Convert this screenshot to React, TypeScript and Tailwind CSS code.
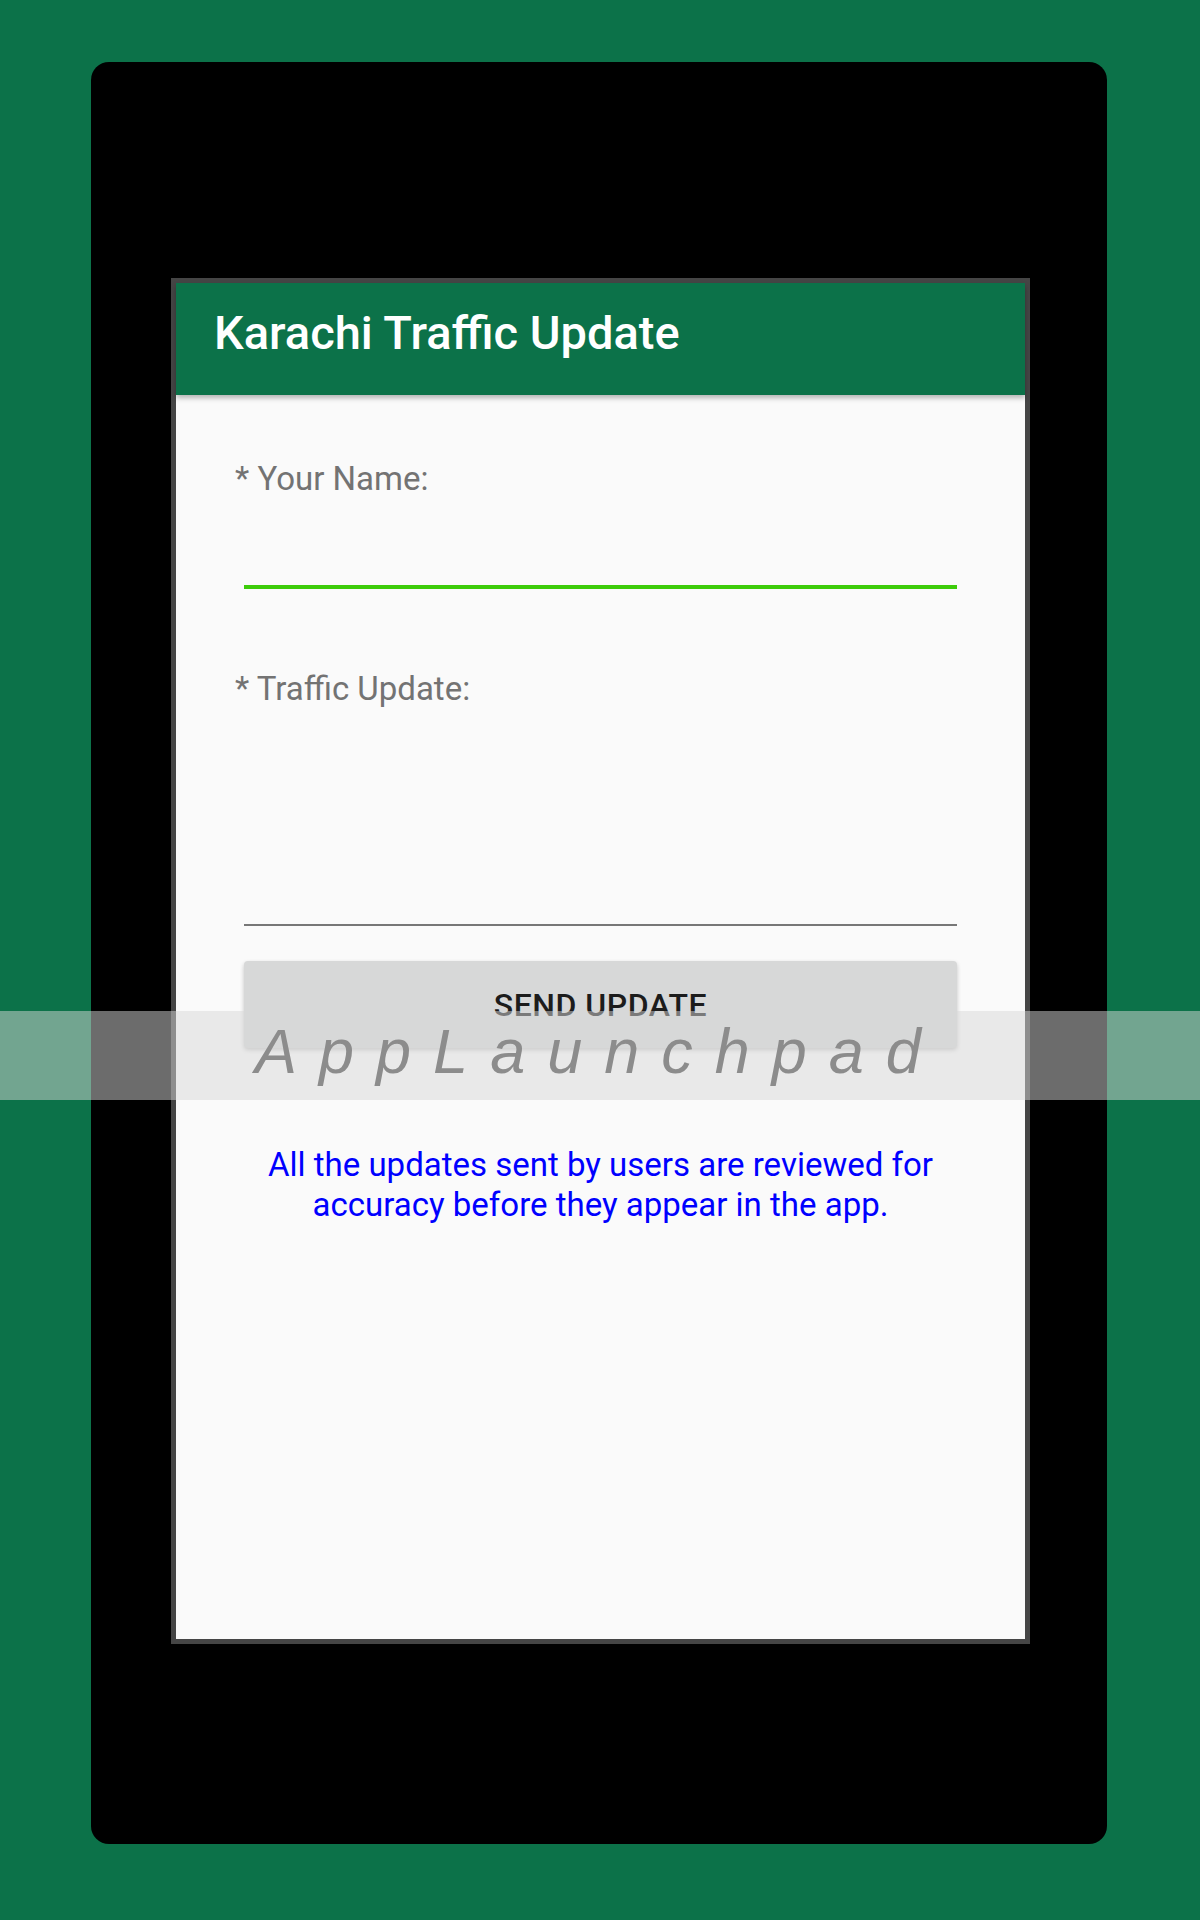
import React from "react";

export default function App() {
  return (
    <div className="relative w-[1200px] h-[1920px] overflow-hidden bg-[#0c7249] font-[Roboto,sans-serif]">
      <div className="ml-[91px] mt-[62px] w-[1016px] h-[1782px] rounded-[18px] bg-black pt-[216px] pl-[80px]">
        <div className="w-[859px] h-[1366px] border-[5px] border-[#454545] bg-[#fafafa] flex flex-col">
          <div className="relative z-10 h-[112px] shrink-0 bg-[#0c7249] flex items-center pl-[38px] pb-[14px] shadow-[0_3px_5px_rgba(0,0,0,0.28)]">
            <span className="text-white text-[47px] leading-none font-medium">Karachi Traffic Update</span>
          </div>
          <div className="flex flex-col">
            <div className="mt-[66px] ml-[59px] h-[36px] text-[33px] leading-[36px] text-[#737373]">* Your Name:</div>
            <div className="mx-[68px] h-[92px] border-b-[4px] border-[#3dcc0a]"></div>
            <div className="mt-[82px] ml-[59px] h-[36px] text-[33px] leading-[36px] text-[#737373]">* Traffic Update:</div>
            <div className="mx-[68px] h-[219px] border-b-[2px] border-[#777777]"></div>
            <div className="mt-[35px] mx-[68px] h-[87px] rounded-[4px] bg-[#d7d8d8] shadow-[0_2px_4px_rgba(0,0,0,0.22)] flex items-center justify-center">
              <span className="text-[32px] leading-none font-medium text-[#1c1c1c] tracking-[0.5px]">SEND UPDATE</span>
            </div>
            <div className="mt-[97px] px-[20px] text-center text-[33px] leading-[40px] text-[#0000ff]">
              All the updates sent by users are reviewed for
              <br />
              accuracy before they appear in the app.
            </div>
          </div>
        </div>
      </div>
      <div className="absolute left-0 top-[1011px] w-full h-[89px] bg-[rgba(216,216,216,0.5)]"></div>
      <div className="absolute left-[255px] top-[1020px] text-[63px] leading-none italic tracking-[22px] text-[#8c8c8c] font-['Liberation_Sans',sans-serif] whitespace-nowrap">
        AppLaunchpad
      </div>
    </div>
  );
}
